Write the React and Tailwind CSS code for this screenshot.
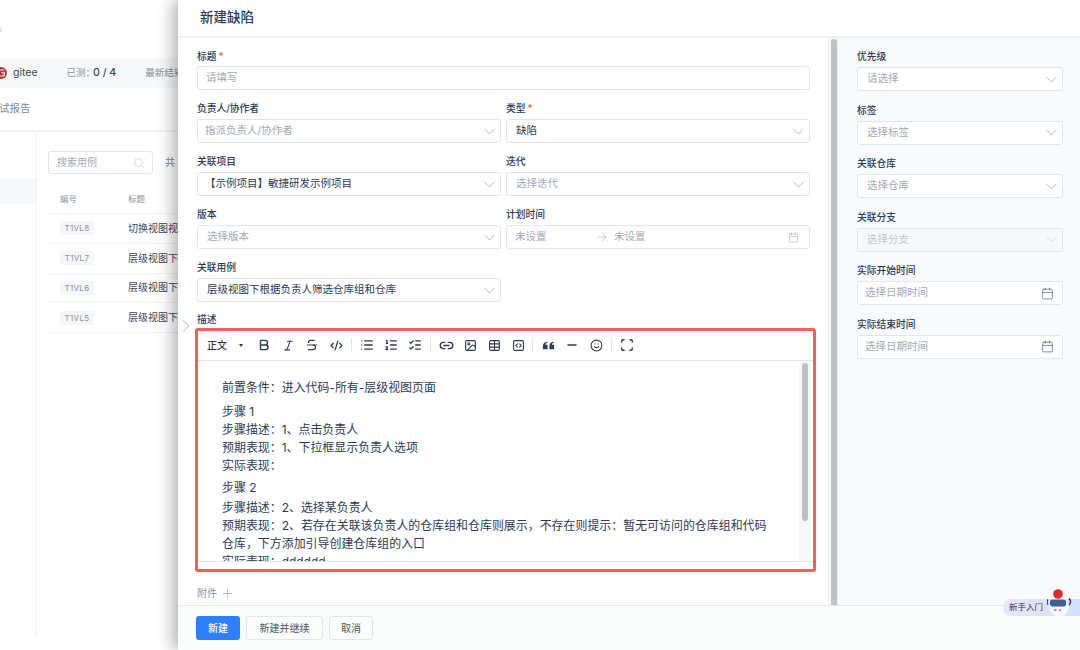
import React from "react";
import { ChevronDown, ChevronRight, Search, Calendar, ArrowRight, Plus, Bold, Italic, Strikethrough, CodeXml, List, ListOrdered, ListChecks, Link2, Image, Table, SquareCode, Minus, Smile, Scan } from "lucide-react";

function Label({ children, required, h = "h-[19px]", className = "" }) {
  return (
    <div className={`${h} ${className} flex items-center text-[9.75px] font-medium text-[#2b3a55]`}>
      {children}
      {required && <span className="ml-[2px] text-[#f0502e]">*</span>}
    </div>
  );
}

function Select({ text, placeholder, pad = "pl-[9px]", disabled, cal }) {
  return (
    <div className={`flex h-[24px] items-center justify-between rounded-[3px] border border-[#e3e5ee] ${cal ? "pr-[8px]" : "pr-[1px]"} ${pad} text-[10.5px] ${disabled ? "bg-[#f7f8fa]" : "bg-white"}`}>
      <span className={text ? "text-[#2b3a55]" : disabled ? "text-[#c0c5ce]" : "text-[#a3a9b6]"}>{text || placeholder}</span>
      {cal ? (
        <Calendar size={13} strokeWidth={1.3} className="text-[#55607a]" />
      ) : (
        <ChevronDown size={19} strokeWidth={0.85} className={disabled ? "text-[#c9ced8]" : "text-[#8e95a5]"} />
      )}
    </div>
  );
}

function Field({ label, required, children, labelClass = "" }) {
  return (
    <div>
      <Label required={required} className={labelClass}>{label}</Label>
      {children}
    </div>
  );
}

function TB({ icon: I, s = 13, sw = 2.2 }) {
  return (
    <span className="flex w-[24px] justify-center text-[#2d3a55]">
      <I size={s} strokeWidth={sw} />
    </span>
  );
}

function QuoteIcon({ size = 13 }) {
  return (
    <svg width={size} height={size} viewBox="0 0 14 14" fill="currentColor">
      <path d="M1 11V7.5C1 5 2.3 3.4 5.6 2.6L6 3.6C4.5 4.2 3.7 5 3.6 6.2H6V11H1Z" />
      <path d="M8 11V7.5C8 5 9.3 3.4 12.6 2.6L13 3.6C11.5 4.2 10.7 5 10.6 6.2H13V11H8Z" />
    </svg>
  );
}

function Divider({ className = "mx-[3px]" }) {
  return <span className={`${className} h-[14px] w-px bg-[#e4e6ed]`} />;
}

function GiteeLogo() {
  return (
    <svg className="-ml-[5px] mr-[6px] shrink-0" width="12" height="12" viewBox="0 0 12 12">
      <circle cx="6" cy="6" r="6" fill="#b5362f" />
      <path d="M9.5 3H5.2A2.2 2.2 0 0 0 3 5.2V9H7.5A2 2 0 0 0 9.5 7V5.8H6" fill="none" stroke="#f4e9e6" strokeWidth="1.2" />
      <circle cx="6" cy="6.8" r="0.8" fill="#4a3a3a" />
    </svg>
  );
}

const rows = [
  ["T1VL8", "切换视图视图"],
  ["T1VL7", "层级视图下根据"],
  ["T1VL6", "层级视图下根据"],
  ["T1VL5", "层级视图下根据"],
];

function LeftPage() {
  return (
    <div className="flex h-full w-[178px] shrink-0 flex-col overflow-hidden bg-white">
      <div className="flex h-[58px] items-center">
        <ChevronRight size={10} strokeWidth={1} className="-ml-[5px] mt-[3px] rotate-[45deg] text-[#8e95a5]" />
      </div>
      <div className="flex h-[30px] items-center whitespace-nowrap bg-[#f7f8fa]">
        <GiteeLogo />
        <span className="text-[10.5px] text-[#3a4660]">gitee</span>
        <span className="ml-[29px] text-[9.5px] text-[#8a92a3]">已测：</span>
        <span className="-ml-[2px] text-[10.5px] font-medium text-[#3a4660]">0 / 4</span>
        <span className="ml-[29px] text-[9.5px] text-[#8a92a3]">最新结果</span>
      </div>
      <div className="flex h-[44px] items-center border-b-2 border-[#f0f1f4] text-[10.5px] text-[#7d8596]">
        <span className="-ml-[1px]">试报告</span>
      </div>
      <div className="flex flex-1 pb-[14px]">
        <div className="w-[37px] shrink-0 border-r border-[#eef0f4] pt-[46px]">
          <div className="h-[26px] bg-[#f7f8fa]" />
        </div>
        <div className="min-w-0 flex-1 pl-[11px] pt-[19px]">
          <div className="flex items-center whitespace-nowrap">
            <div className="flex h-[23px] w-[105px] shrink-0 items-center justify-between rounded-[3px] border border-[#e3e5ee] pl-[8px] pr-[7px] text-[10px] text-[#a3a9b6]">
              搜索用例
              <Search size={12} strokeWidth={1} className="text-[#b4bac6]" />
            </div>
            <span className="ml-[12px] text-[10px] text-[#7d8596]">共</span>
          </div>
          <div className="flex h-[39px] items-center whitespace-nowrap pl-[12px] pt-[11px] text-[8.5px] text-[#8a92a3]">
            <span className="w-[68px]">编号</span>
            <span>标题</span>
          </div>
          {rows.map(([id, title]) => (
            <div key={id} className="flex h-[29.75px] items-center whitespace-nowrap border-t border-[#f2f3f6] pl-[12px]">
              <span className="flex h-[14px] w-[34px] shrink-0 items-center justify-center rounded-[2px] bg-[#f5f6f8] text-[8px] tracking-[0.3px] text-[#8a92a3]">{id}</span>
              <span className="ml-[34px] text-[10px] text-[#3a4660]">{title}</span>
            </div>
          ))}
          <div className="border-t border-[#f2f3f6]" />
        </div>
      </div>
    </div>
  );
}

function Editor() {
  return (
    <div className="-ml-[2px] -mr-[5.5px] flex h-[244px] flex-col rounded-[3px] border-[3px] border-[#f1605a] bg-white">
      <div className="flex h-[30px] shrink-0 items-center border-b border-[#e3e5ee] pb-[1px] pl-[9px]">
        <span className="w-[20px] whitespace-nowrap text-[10px] font-medium text-[#2d3a55]">正文</span>
        <span className="ml-[12px] mr-[9px] h-0 w-0 border-x-[2.5px] border-t-[3px] border-x-transparent border-t-[#2d3a55]" />
        <TB icon={Bold} s={14} sw={2.4} />
        <TB icon={Italic} s={13} sw={2} />
        <TB icon={Strikethrough} s={14} sw={2} />
        <TB icon={CodeXml} s={13} sw={2.4} />
        <Divider />
        <TB icon={List} s={14} />
        <TB icon={ListOrdered} s={14} />
        <TB icon={ListChecks} s={14} />
        <Divider />
        <TB icon={Link2} s={15} sw={2.2} />
        <TB icon={Image} s={13} sw={2} />
        <TB icon={Table} s={13} sw={2} />
        <TB icon={SquareCode} s={13} sw={2} />
        <Divider className="ml-[2px] mr-[3px]" />
        <span className="flex w-[24px] justify-center text-[#2d3a55]"><QuoteIcon /></span>
        <TB icon={Minus} s={14} sw={2.2} />
        <TB icon={Smile} s={13} sw={2} />
        <Divider />
        <TB icon={Scan} s={14} sw={2.4} />
      </div>
      <div className="flex h-[201px] shrink-0 border-b border-[#e3e5ee]">
        <div className="min-w-0 flex-1 overflow-hidden pl-[24px] pr-[28px] pt-[18px] text-[11.95px] leading-[18px] text-[#2d3a55]">
          <p className="mb-[6px]">前置条件：进入代码-所有-层级视图页面</p>
          <p>步骤 1</p>
          <p>步骤描述：1、点击负责人</p>
          <p>预期表现：1、下拉框显示负责人选项</p>
          <p className="mb-[4px]">实际表现：</p>
          <p className="mb-[2px]">步骤 2</p>
          <p>步骤描述：2、选择某负责人</p>
          <p>预期表现：2、若存在关联该负责人的仓库组和仓库则展示，不存在则提示：暂无可访问的仓库组和代码仓库，下方添加引导创建仓库组的入口</p>
          <p>实际表现：dddddd</p>
        </div>
        <div className="mr-[3px] h-full w-[11px] shrink-0 bg-[#f8f8f8] pl-[3px] pr-[2px] pt-[2px]">
          <div className="h-[158px] rounded-full bg-[#c1c1c1]" />
        </div>
      </div>
    </div>
  );
}

function Drawer() {
  return (
    <div className="relative z-10 flex h-full min-w-0 flex-1 flex-col bg-white shadow-[-6px_0_14px_rgba(0,0,0,0.28)]">
      <div className="flex h-[38px] shrink-0 items-center border-b-2 border-[#f0f1f4] pb-[2px] pl-[22px] text-[13.5px] font-medium text-[#2b3a55]">
        新建缺陷
      </div>
      <div className="flex min-h-0 flex-1">
        <div className="w-[650px] shrink-0 overflow-hidden pl-[19px] pr-[18px] pt-[9px]">
          <Field label="标题" required labelClass="pt-[2px]">
            <div className="flex h-[24px] items-center rounded-[3px] border border-[#e3e5ee] pl-[8px] text-[10.5px] text-[#a3a9b6]">请填写</div>
          </Field>
          <div className="mt-[10px] grid grid-cols-2 gap-x-[5px] gap-y-[10px]">
            <Field label="负责人/协作者"><Select placeholder="指派负责人/协作者" pad="pl-[7px]" /></Field>
            <Field label="类型" required><Select text="缺陷" /></Field>
            <Field label="关联项目"><Select text="【示例项目】敏捷研发示例项目" pad="pl-[7px]" /></Field>
            <Field label="迭代"><Select placeholder="选择迭代" /></Field>
            <Field label="版本"><Select placeholder="选择版本" /></Field>
            <Field label="计划时间">
              <div className="flex h-[24px] items-center rounded-[3px] border border-[#e3e5ee] pl-[8px] pr-[10px] text-[10.5px] text-[#a3a9b6]">
                <span className="w-[80px]">未设置</span>
                <ArrowRight size={14} strokeWidth={0.9} className="mr-[5px] text-[#8e95a5]" />
                <span className="flex-1">未设置</span>
                <Calendar size={11} strokeWidth={1} className="text-[#8e95a5]" />
              </div>
            </Field>
            <Field label="关联用例"><Select text="层级视图下根据负责人筛选仓库组和仓库" /></Field>
          </div>
          <div className="mt-[10px]"><Label h="h-[16px]">描述</Label></div>
          <Editor />
          <div className="mt-[14px] flex items-center text-[10px] text-[#8a92a3]">
            附件
            <Plus size={15} strokeWidth={0.9} className="ml-[3px]" />
          </div>
        </div>
        <div className="flex w-[9px] shrink-0 justify-end border-l border-[#ededed] bg-[#fafafa] pt-[1px]">
          <div className="h-full w-[6px] rounded-t-full bg-[#c1c1c1]" />
        </div>
        <div className="min-w-0 flex-1 border-l border-[#eff0f2] bg-[#f9fafb] pl-[19px] pr-[17px] pt-[10px]">
          <div className="flex flex-col gap-[10.5px]">
            <Field label="优先级"><Select placeholder="请选择" /></Field>
            <Field label="标签"><Select placeholder="选择标签" /></Field>
            <Field label="关联仓库"><Select placeholder="选择仓库" /></Field>
            <Field label="关联分支"><Select placeholder="选择分支" disabled /></Field>
            <Field label="实际开始时间"><Select placeholder="选择日期时间" pad="pl-[7px]" cal /></Field>
            <Field label="实际结束时间"><Select placeholder="选择日期时间" pad="pl-[7px]" cal /></Field>
          </div>
        </div>
      </div>
      <div className="flex h-[45px] shrink-0 items-center gap-[6px] border-t border-[#e8e9ec] bg-[#fbfcfc] pl-[18px] text-[10px]">
        <button className="h-[24px] w-[44px] rounded-[3px] bg-[#2d7ffb] font-medium text-white">新建</button>
        <button className="h-[24px] w-[77px] rounded-[3px] border border-[#e3e5ee] text-[#4a5568]">新建并继续</button>
        <button className="h-[24px] w-[44px] rounded-[3px] border border-[#e3e5ee] text-[#4a5568]">取消</button>
      </div>
      <ChevronRight size={22} strokeWidth={0.8} className="absolute -left-[3px] top-[315px] text-[#8e95a5]" />
      <div className="absolute right-0 top-[599px] flex h-[17px] w-[77px] items-center rounded-l-[8px] bg-[linear-gradient(90deg,#ece4f6,#d0e2fb)] pl-[6px] text-[8.5px] text-[#2b3a55]">
        新手入门
      </div>
      <svg className="absolute right-[8px] top-[588px]" width="25" height="29" viewBox="0 0 25 29">
        <ellipse cx="12" cy="19" rx="9.5" ry="10" fill="#f4f7fe" />
        <circle cx="11" cy="6" r="4.8" fill="#e0282e" />
        <rect x="3" y="11.5" width="16" height="7" rx="2.5" fill="#3f5f93" />
        <path d="M1 11.5C-0.2 13 -0.2 15 1 16.5M22 10.5C24 12.5 24 15 22 17" stroke="#2d2a7a" strokeWidth="1.3" fill="none" />
        <path d="M7 22H9.5M12 22H14" stroke="#4a2fa8" strokeWidth="1" />
      </svg>
    </div>
  );
}

export default function App() {
  return (
    <div className="flex h-[650px] w-[1080px] overflow-hidden bg-white font-['Inter','Noto_Sans_CJK_SC',sans-serif]">
      <LeftPage />
      <Drawer />
    </div>
  );
}
